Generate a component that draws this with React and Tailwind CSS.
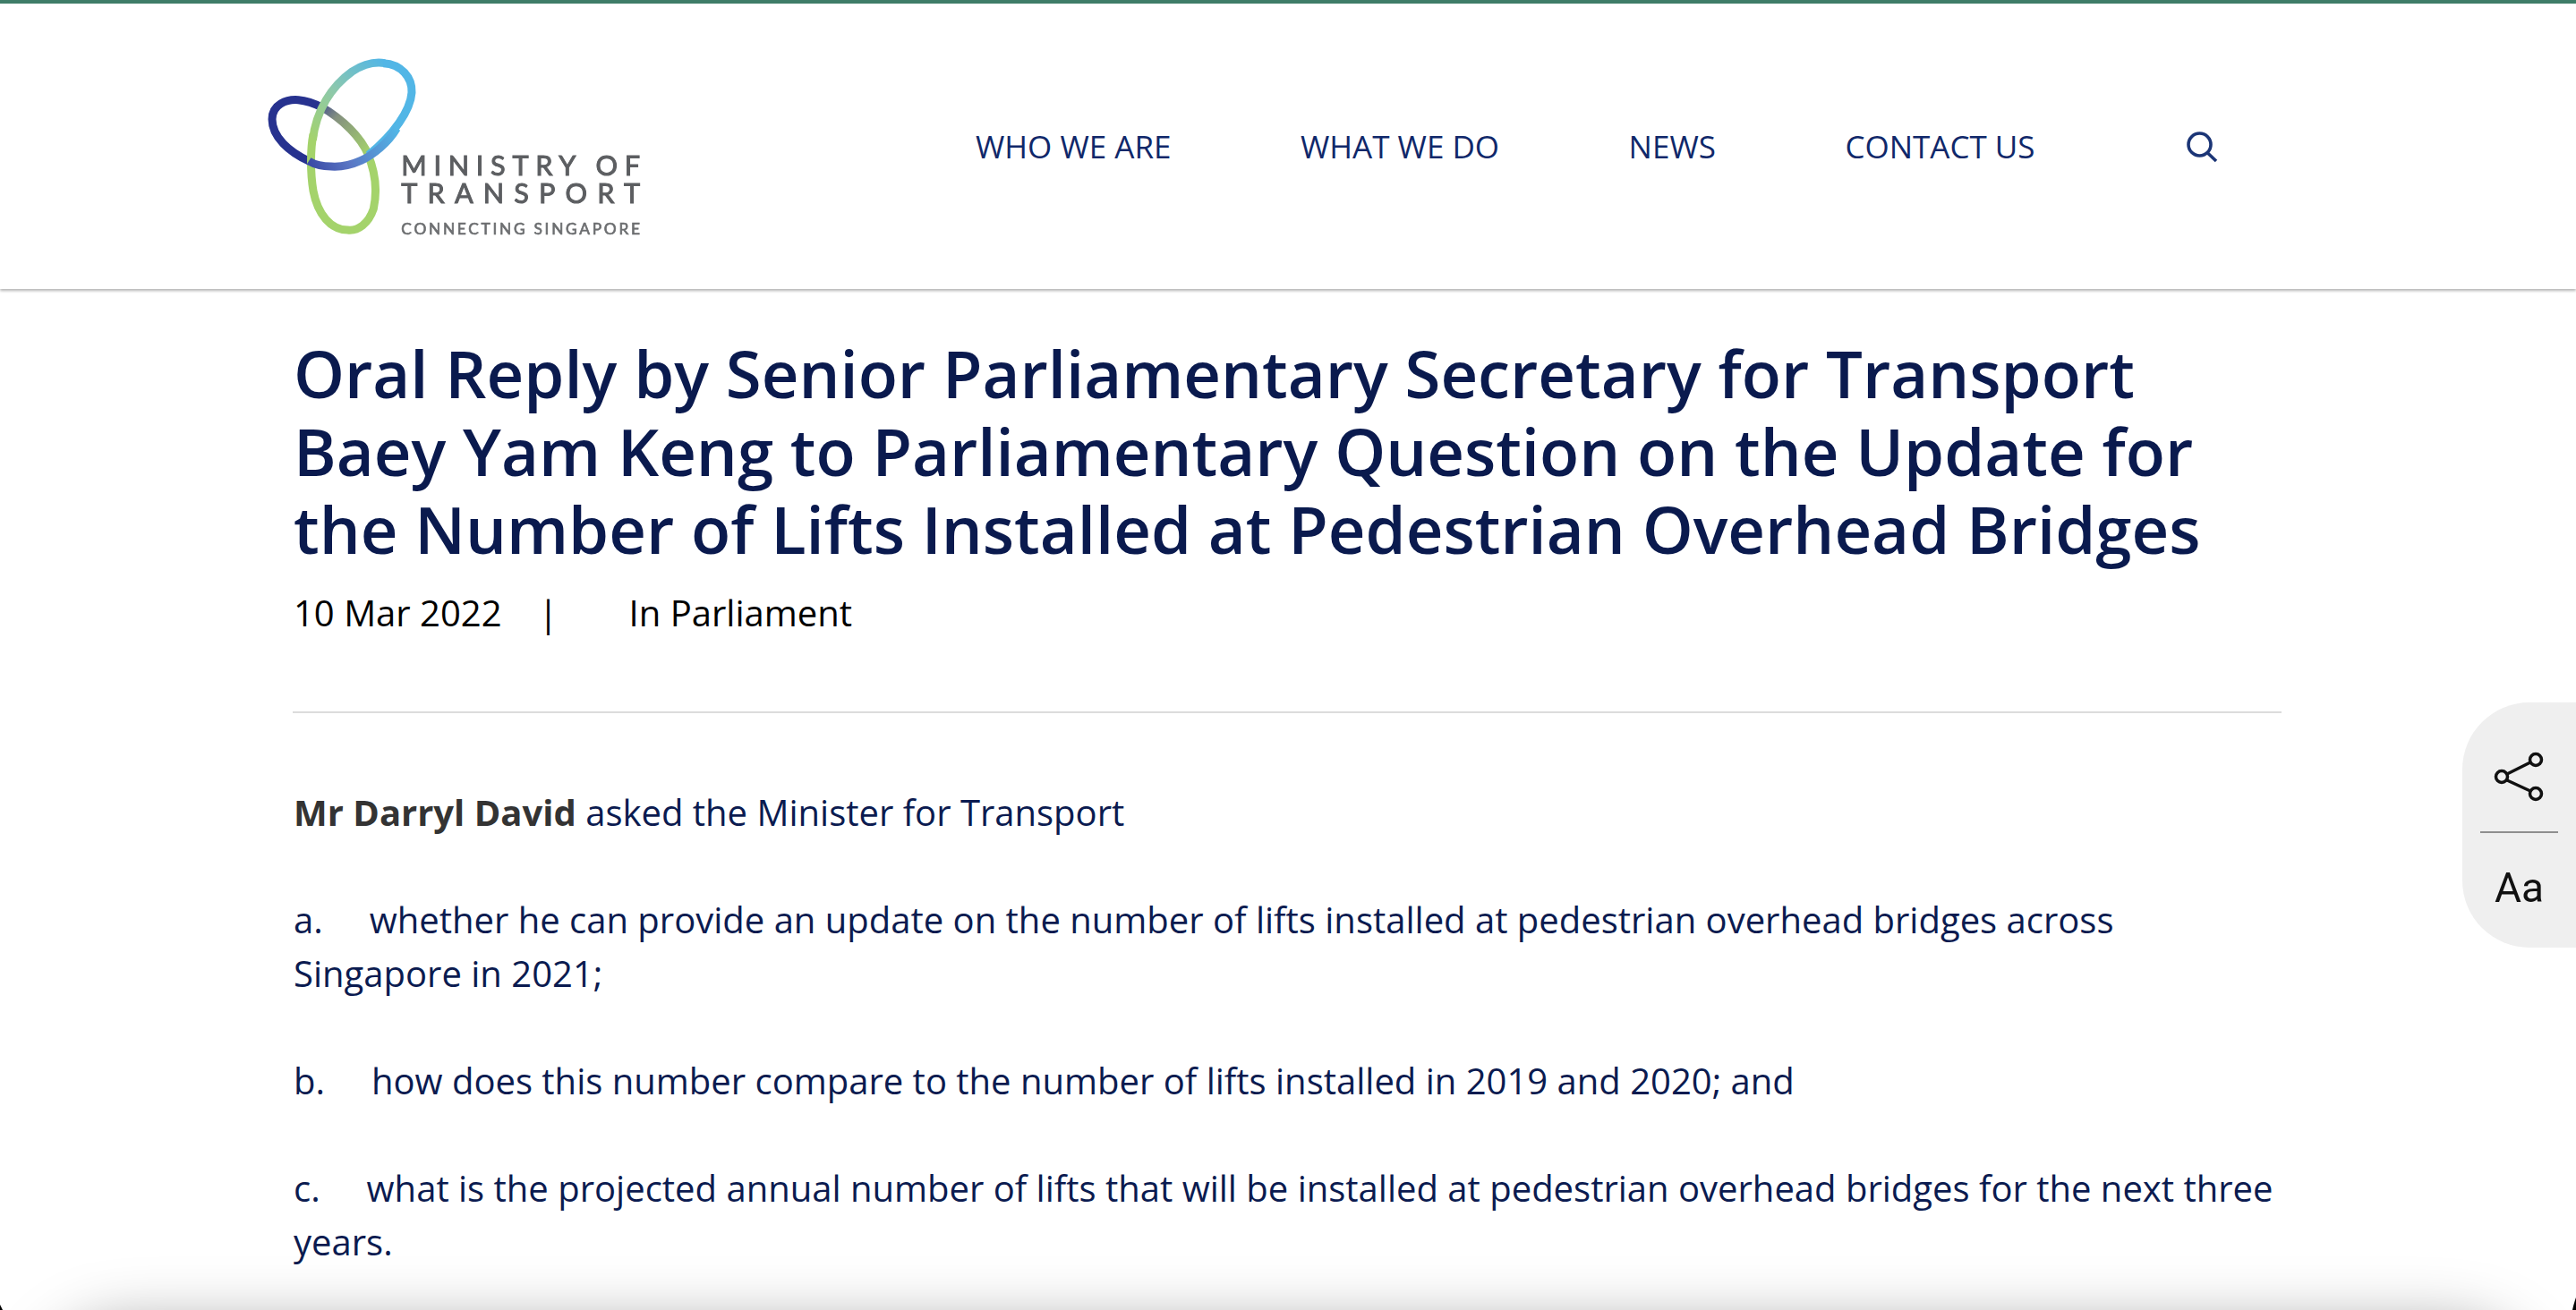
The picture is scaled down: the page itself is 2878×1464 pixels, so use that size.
const openSans = "font-['Open_Sans',sans-serif]";

function Logo() {
  return (
    <svg width="500" height="340" viewBox="0 0 1500 1020" className="block blur-[0.6px]">
      <defs>
        <linearGradient id="navyGrey" gradientUnits="userSpaceOnUse" x1="240" y1="345" x2="425" y2="520">
          <stop offset="0" stopColor="#2d3a96" />
          <stop offset="0.35" stopColor="#84907f" />
          <stop offset="1" stopColor="#a4d36b" />
        </linearGradient>
        <linearGradient id="greenBlue" gradientUnits="userSpaceOnUse" x1="240" y1="480" x2="480" y2="207">
          <stop offset="0" stopColor="#a4d36b" />
          <stop offset="0.5" stopColor="#8cc8ad" />
          <stop offset="1" stopColor="#52b6e6" />
        </linearGradient>
        <linearGradient id="blueIndigo" gradientUnits="userSpaceOnUse" x1="520" y1="430" x2="225" y2="545">
          <stop offset="0" stopColor="#52b6e6" />
          <stop offset="0.6" stopColor="#5a76c4" />
          <stop offset="1" stopColor="#3a4aa6" />
        </linearGradient>
      </defs>
      <g fill="none" strokeWidth="27" strokeLinecap="butt">
        <path d="M225 540 C160 510 102 460 102 400 C102 350 150 332 190 335 C220 338 250 350 270 360" stroke="#27328f" />
        <path d="M262 355 C340 400 400 460 425 520" stroke="url(#navyGrey)" />
        <path d="M422 515 C450 580 455 640 442 700 C425 750 390 775 355 771 C300 771 255 720 240 640 C230 580 230 500 240 450" stroke="#a4d36b" />
        <path d="M238 470 C250 370 300 290 370 240 C410 214 450 207 480 212" stroke="url(#greenBlue)" />
        <path d="M475 212 C535 215 572 260 570 310 C566 370 510 450 425 520" stroke="#52b6e6" />
        <path d="M520 430 C490 480 440 520 400 538 C360 556 330 560 300 558 C270 558 245 552 225 540" stroke="url(#blueIndigo)" />
      </g>
      <g fill="#5c5e61" fontFamily="Lato, sans-serif">
        <text x="535" y="588" fontSize="92" stroke="#5c5e61" strokeWidth="3" textLength="800" lengthAdjust="spacing">MINISTRY OF</text>
        <text x="535" y="682" fontSize="92" stroke="#5c5e61" strokeWidth="3" textLength="800" lengthAdjust="spacing">TRANSPORT</text>
        <text x="535" y="785" fontSize="52" fill="#6c6e70" stroke="#6c6e70" strokeWidth="2" textLength="800" lengthAdjust="spacing">CONNECTING SINGAPORE</text>
      </g>
    </svg>
  );
}

function Header() {
  return (
    <header className="relative z-10 h-[323px] border-t-4 border-[#3f7d68] bg-white shadow-[0_2px_3px_rgba(0,0,0,0.3)] flex items-start">
      <div className="w-[500px] ml-[270px] -mt-1"><Logo /></div>
      <nav className={`${openSans} flex items-center gap-[144.5px] ml-[320px] mt-[135px] text-[35px] leading-[50px] text-[#10286a]`}>
        <a>WHO WE ARE</a>
        <a>WHAT WE DO</a>
        <a>NEWS</a>
        <a>CONTACT US</a>
      </nav>
      <svg width="38" height="38" viewBox="0 0 38 38" fill="none" stroke="#1b3576" strokeWidth="3.6" className="ml-[167px] mt-[141px]">
        <circle cx="16.5" cy="16.5" r="12.5" />
        <path d="M25.5 26 L35 35" />
      </svg>
    </header>
  );
}

function SidePanel() {
  return (
    <div className="fixed right-0 top-[785px] z-20 w-[127px] h-[274px] rounded-l-[75px] bg-[#efefef] flex flex-col items-center">
      <svg width="60" height="60" viewBox="0 0 60 60" fill="none" stroke="#111" strokeWidth="3.5" className="mt-[54px]">
        <circle cx="48" cy="10" r="6.5" />
        <circle cx="10" cy="29" r="6.5" />
        <circle cx="48" cy="48" r="6.5" />
        <path d="M16 26 L42 13 M16 33 L42 45" />
      </svg>
      <div className="w-[87px] h-[2px] bg-[#8f8f8f] mt-[30px]" />
      <div className="font-['Roboto',sans-serif] text-[46px] leading-[54px] text-[#111] mt-[34px]">Aa</div>
    </div>
  );
}

export default function App() {
  return (
    <div className="relative h-[1464px] overflow-hidden bg-white">
      <Header />
      <main className={`${openSans} w-[2221px] ml-[328px] pt-[51px]`}>
        <h1 className="text-[72.45px] leading-[87px] font-semibold text-[#0a1a4e]">
          Oral Reply by Senior Parliamentary Secretary for Transport Baey Yam Keng to Parliamentary Question on the Update for the Number of Lifts Installed at Pedestrian Overhead Bridges
        </h1>
        <div className="mt-[20px] text-[40px] leading-[60px] text-black flex">
          <span>10 Mar 2022</span>
          <span className="ml-[41px]">|</span>
          <span className="ml-[79px]">In Parliament</span>
        </div>
        <div className="mt-[80px] -ml-px h-[2px] bg-[#dcdcdc]" />
        <div className="mt-[81px] text-[40px] leading-[60px] text-[#0b1b50] space-y-[60px]">
          <p><strong className="font-bold text-[#333333]">Mr Darryl David</strong> asked the Minister for Transport</p>
          <p>a.&nbsp;&nbsp;&nbsp;&nbsp; whether he can provide an update on the number of lifts installed at pedestrian overhead bridges across Singapore in 2021;</p>
          <p>b.&nbsp;&nbsp;&nbsp;&nbsp; how does this number compare to the number of lifts installed in 2019 and 2020; and</p>
          <p>c.&nbsp;&nbsp;&nbsp;&nbsp; what is the projected annual number of lifts that will be installed at pedestrian overhead bridges for the next three years.</p>
        </div>
      </main>
      <SidePanel />
      {/* shadow of the bar sitting just under the fold */}
      <div className="fixed left-[50px] right-[50px] top-[1482px] h-[200px] rounded-t-[90px] bg-white shadow-[0_0_70px_rgba(0,0,0,0.38)]" />
      {/* window corners */}
      <svg width="4" height="14" viewBox="0 0 4 14" className="absolute right-0 bottom-0"><path d="M4 0 V14 H0 C1 9 2.5 4 4 0 Z" fill="#000" /></svg>
      <svg width="3" height="6" viewBox="0 0 3 6" className="absolute left-0 bottom-0"><path d="M0 0 C1 2 2 4 3 6 H0 Z" fill="#000" /></svg>
    </div>
  );
}
